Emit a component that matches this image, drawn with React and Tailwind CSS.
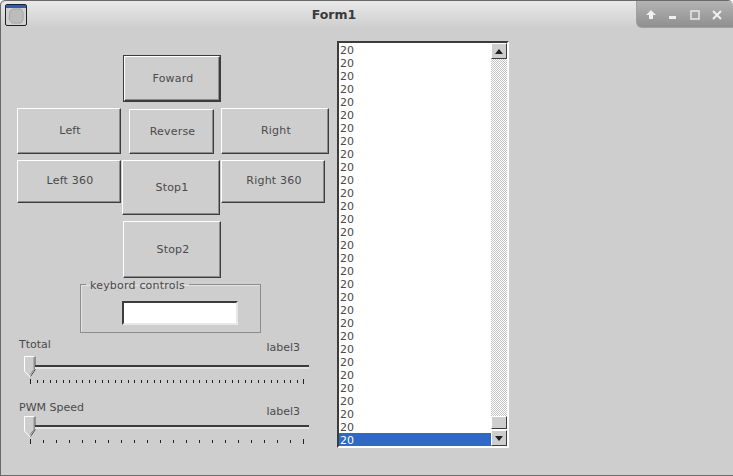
const listRows = Array.from({ length: 31 }, (_, i) => i);

function Btn({ label, className = '', textClass = '' }) {
  return (
    <button className={`flex items-center justify-center shrink-0 border border-t-white border-l-white border-r-[#3c3c3c] border-b-[#3c3c3c] shadow-[inset_-1px_-1px_0_#8c8c8c] bg-[#cecece] text-[11px] tracking-[0.2px] text-[#4a4a4a] pt-[2px] pl-[2px] ${className}`}>
      <span className={textClass}>{label}</span>
    </button>
  );
}

function Slider({ name, ticks, headerClass, valueClass }) {
  const step = 273 / (ticks - 1);
  return (
    <div className="w-[300px] ml-[16px]">
      <div className={`flex justify-between text-[11px] text-[#4a4a4a] ${headerClass}`}>
        <span className="pl-[2px]">{name}</span>
        <span className={valueClass}>label3</span>
      </div>
      <div className="flex items-center h-[22px] ml-[7px] w-[285px]">
        <svg width="12" height="22" viewBox="0 0 12 22" className="shrink-0">
          <path d="M.5.5H11V14L6 21 .5 15Z" fill="#cecece" stroke="#fff" />
          <path d="M11 .5V14L6.5 20.5" fill="none" stroke="#3c3c3c" />
          <path d="M10 1.5V13.5L6 18.5" fill="none" stroke="#8c8c8c" />
        </svg>
        <div className="flex-1 h-[4px] -ml-[1px] flex flex-col">
          <div className="h-[2px] bg-[#3c3c3c]" />
          <div className="h-[2px] bg-[#e4e4e4]" />
        </div>
      </div>
      <svg width="290" height="5" className="block ml-[12px] mt-[1px]">
        {Array.from({ length: ticks }, (_, i) => {
          const x = Math.round(1 + i * step);
          const long = i === 0 || i === ticks - 1;
          return <rect key={i} x={x} y={long ? 0 : 1} width="1" height={long ? 5 : 3} fill="#222" />;
        })}
      </svg>
    </div>
  );
}

function ScrollBtn({ d }) {
  return (
    <div className="h-[16px] flex items-center justify-center border border-t-white border-l-white border-r-[#3c3c3c] border-b-[#3c3c3c] bg-[#cecece]">
      <svg width="8" height="5" viewBox="0 0 8 5"><path d={d} fill="#222" /></svg>
    </div>
  );
}

export default function App() {
  return (
    <div className="w-[733px] h-[476px] bg-[#cecece] font-['DejaVu_Sans',sans-serif] flex flex-col border-l border-b border-[#6a6a6a] rounded-t-[5px] overflow-hidden">
      <header className="h-[28px] shrink-0 flex items-start border-t border-[#6a6a6a] bg-gradient-to-b from-[#e9e9e9] to-[#cecece] rounded-t-[5px]">
        <svg width="22" height="22" viewBox="0 0 22 22" className="ml-[4px] mt-[3px] shrink-0">
          <rect x=".5" y=".5" width="21" height="21" rx="1.5" fill="#d0d0d0" stroke="#222" />
          <rect x="1" y="1" width="20" height="3" fill="#2f5ea8" />
          <path d="M5 7 8 5H16L18 8V16L16 19H7L4 15Z" fill="#bcbcbc" stroke="#a4a4a4" />
        </svg>
        <div className="flex-1 text-center font-bold text-[12.5px] leading-[28px] text-[#3a3a3a] pl-[5px]">Form1</div>
        <div className="w-[97px] h-[27px] shrink-0 flex items-center justify-center gap-[10px] pr-[2px] pt-[2px] rounded-bl-[6px] rounded-tr-[5px] bg-gradient-to-b from-[#b4b4b4] to-[#8f8f8f] border-l border-b border-[#a0a0a0]">
          <svg width="12" height="12" viewBox="0 0 12 12"><path d="M6 1 11 6H8V10H4V6H1Z" fill="#f0f0f0" /></svg>
          <svg width="12" height="12" viewBox="0 0 12 12"><rect x="2" y="7" width="7" height="3" fill="#f0f0f0" /></svg>
          <svg width="12" height="12" viewBox="0 0 12 12"><rect x="2" y="2" width="8" height="8" fill="none" stroke="#e4e4e4" strokeWidth="1.6" /></svg>
          <svg width="12" height="12" viewBox="0 0 12 12"><path d="M2 2 10 10M10 2 2 10" stroke="#f0f0f0" strokeWidth="2" /></svg>
        </div>
      </header>

      <main className="flex flex-1 items-start">
        <section className="w-[336px] shrink-0">
          <div className="mt-[27px] pl-[122px]">
            <div className="w-[98px] h-[47px] border border-[#3c3c3c]">
              <Btn label="Foward" className="w-full h-full" />
            </div>
          </div>

          <div className="flex mt-[6px] pl-[16px]">
            <Btn label="Left" className="w-[104px] h-[46px]" textClass="-mt-[2px]" />
            <Btn label="Reverse" className="w-[85px] h-[45px] mt-[1px] ml-[8px]" />
            <Btn label="Right" className="w-[108px] h-[46px] ml-[7px]" textClass="-mt-[2px]" />
          </div>

          <div className="flex items-start mt-[6px] pl-[16px]">
            <Btn label="Left 360" className="w-[104px] h-[43px]" textClass="-mt-[2px]" />
            <Btn label="Stop1" className="w-[98px] h-[55px] ml-[1px]" />
            <Btn label="Right 360" className="w-[104px] h-[43px] ml-[1px]" textClass="-mt-[2px]" />
          </div>

          <div className="mt-[6px] pl-[122px]">
            <Btn label="Stop2" className="w-[98px] h-[57px]" />
          </div>

          <fieldset className="w-[181px] h-[54px] ml-[79px] mt-[1px] border border-[#8c8c8c] shadow-[inset_1px_1px_0_#e4e4e4]">
            <legend className="ml-[5px] px-[4px] text-[11px] leading-[11px] tracking-[0.2px] text-[#4a4a4a] translate-y-[1px]">keybord controls</legend>
            <div className="w-[116px] h-[24px] mt-[11px] ml-[41px] bg-white border-2 border-t-[#3c3c3c] border-l-[#3c3c3c] border-r-[#e8e8e8] border-b-[#e8e8e8]" />
          </fieldset>

          <div className="mt-[4px]">
            <Slider name="Ttotal" ticks={43} headerClass="h-[19px]" valueClass="mt-[3px] mr-[17px]" />
          </div>
          <div className="mt-[16px]">
            <Slider name="PWM Speed" ticks={22} headerClass="h-[16px]" valueClass="mt-[4px] mr-[17px]" />
          </div>
        </section>

        <section className="w-[172px] h-[407px] mt-[13px] flex border-t-2 border-l-2 border-[#3c3c3c] border-r-2 border-b-2 border-r-white border-b-white bg-white">
          <ul className="flex-1 text-[11px] leading-[15px] text-[#4a4a4a]">
            {listRows.map((i) => (
              <li key={i} className={`h-[13px] pl-[1px] ${i === 30 ? 'bg-[#3068c4] text-white' : ''}`}>20</li>
            ))}
          </ul>
          <div className="w-[16px] flex flex-col shrink-0">
            <ScrollBtn d="M4 0 8 5H0Z" />
            <div className="flex-1 bg-[repeating-conic-gradient(#ffffff_0_25%,#c4c4c4_0_50%)] bg-[length:2px_2px]" />
            <div className="h-[13px] bg-[#cecece] border border-t-white border-l-white border-r-[#3c3c3c] border-b-[#3c3c3c]" />
            <div className="h-[1px] bg-white" />
            <ScrollBtn d="M0 0H8L4 5Z" />
          </div>
        </section>
      </main>
    </div>
  );
}
